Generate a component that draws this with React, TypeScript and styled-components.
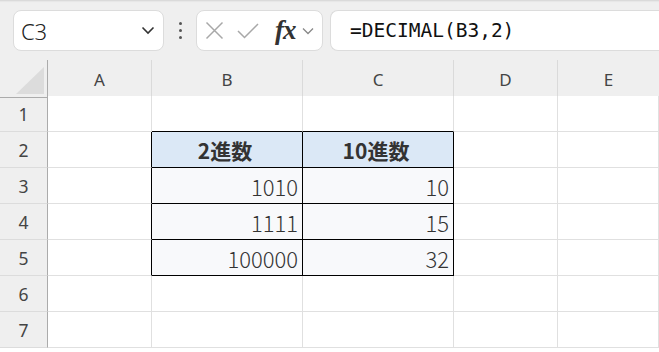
import React from 'react';
import styled, { createGlobalStyle } from 'styled-components';

const GlobalStyle = createGlobalStyle`
  html, body { margin: 0; padding: 0; background: #ffffff; overflow: hidden; }
  * { box-sizing: border-box; }
`;

const Page = styled.div`
  width: 659px;
  height: 352px;
  display: flex;
  flex-direction: column;
  background: #ffffff;
  font-family: "Noto Sans", "Liberation Sans", sans-serif;
`;

const Toolbar = styled.div`
  height: 60px;
  flex-shrink: 0;
  display: flex;
  align-items: flex-start;
  padding: 10px 0 0 13px;
  background: #efefef;
  box-shadow: inset 0 3px 2px -2px rgba(0, 0, 0, 0.12);
`;

const Box = styled.div<{ $w?: number; $grow?: boolean }>`
  height: 41px;
  width: ${(p) => (p.$w ? `${p.$w}px` : 'auto')};
  flex: ${(p) => (p.$grow ? '1 1 auto' : '0 0 auto')};
  background: #ffffff;
  border: 1px solid #dcdcdc;
  border-radius: 8px;
  display: flex;
  align-items: center;
`;

const FormulaBox = styled(Box)`
  border-right: none;
  border-top-right-radius: 0;
  border-bottom-right-radius: 0;
  margin-left: 7px;
`;

const NameText = styled.span`
  flex: 1;
  padding-left: 7px;
  font-size: 22px;
  font-weight: 300;
  color: #222;
  letter-spacing: -0.3px;
`;

const Dots = styled.div`
  width: 32px;
  height: 41px;
  display: flex;
  flex-direction: column;
  align-items: center;
  justify-content: center;
  gap: 4px;
  & > span {
    width: 3px;
    height: 3px;
    border-radius: 50%;
    background: #555;
  }
`;

const IconSlot = styled.span<{ $ml: number }>`
  display: inline-flex;
  margin-left: ${(p) => p.$ml}px;
`;

const FxText = styled.span`
  font-family: "Liberation Serif", serif;
  font-style: italic;
  font-weight: bold;
  font-size: 27px;
  line-height: 1;
  color: #333;
  margin: 0 6px 0 16px;
  letter-spacing: -1px;
`;

const FormulaText = styled.span`
  font-family: "DejaVu Sans Mono", "Liberation Mono", monospace;
  font-size: 19.5px;
  color: #111;
  padding-left: 19px;
`;

const Sheet = styled.div`
  display: grid;
  grid-template-columns: 48px 104px 151px 151px 104px 1fr;
  grid-auto-rows: 36px;
`;

const ColHead = styled.div<{ $last?: boolean }>`
  height: 38px;
  background: #efefef;
  border-bottom: 1px solid #ababab;
  border-right: ${(p) => (p.$last ? 'none' : '1px solid #dadada')};
  display: flex;
  align-items: center;
  justify-content: center;
  font-size: 17px;
  color: #444;
  padding-top: 2px;
`;

const Corner = styled.div`
  height: 38px;
  background: #efefef;
  border-bottom: 1px solid #ababab;
  border-right: 1px solid #ababab;
  position: relative;
  &::after {
    content: '';
    position: absolute;
    right: 3px;
    bottom: 3px;
    width: 0;
    height: 0;
    border-left: 28px solid transparent;
    border-bottom: 27px solid #dcdcdc;
  }
`;

const RowHead = styled.div`
  background: #efefef;
  border-right: 1px solid #ababab;
  border-bottom: 1px solid #dcdcdc;
  display: flex;
  align-items: center;
  justify-content: center;
  font-size: 17.5px;
  color: #444;
`;

type CellKind = 'plain' | 'head' | 'body';

const Cell = styled.div<{ $kind: CellKind; $edgeRight?: boolean; $edgeBottom?: boolean }>`
  background: ${(p) => (p.$kind === 'head' ? '#dbe8f6' : p.$kind === 'body' ? '#f8f9fb' : '#ffffff')};
  border-right: 1px solid ${(p) => (p.$kind !== 'plain' || p.$edgeRight ? '#000' : '#e0e0e0')};
  border-bottom: 1px solid ${(p) => (p.$kind !== 'plain' || p.$edgeBottom ? '#000' : '#e0e0e0')};
  display: flex;
  align-items: center;
  justify-content: ${(p) => (p.$kind === 'head' ? 'center' : 'flex-end')};
  padding-right: 4px;
  font-family: "Noto Sans CJK JP", "Noto Sans", sans-serif;
  font-size: ${(p) => (p.$kind === 'head' ? '21px' : '22px')};
  font-weight: ${(p) => (p.$kind === 'head' ? 700 : 300)};
  color: #333;
`;

const Chevron = () => (
  <svg width="14" height="9" viewBox="0 0 14 9">
    <polyline points="1.5,1.5 7,7 12.5,1.5" fill="none" stroke="#333" strokeWidth="1.6" />
  </svg>
);

const columns = ['A', 'B', 'C', 'D', 'E'];

const tableData: Record<number, [string, string]> = {
  2: ['2進数', '10進数'],
  3: ['1010', '10'],
  4: ['1111', '15'],
  5: ['100000', '32'],
};

const App: React.FC = () => {
  const rows = [1, 2, 3, 4, 5, 6, 7];

  return (
    <Page>
      <GlobalStyle />
      <Toolbar>
        <Box $w={151}>
          <NameText>C3</NameText>
          <IconSlot $ml={0} style={{ marginRight: 8 }}>
            <Chevron />
          </IconSlot>
        </Box>
        <Dots>
          <span />
          <span />
          <span />
        </Dots>
        <Box $w={127}>
          <IconSlot $ml={8}>
            <svg width="19" height="19" viewBox="0 0 19 19">
              <path d="M1.5 1.5 L17.5 17.5 M17.5 1.5 L1.5 17.5" stroke="#a8a8a8" strokeWidth="1.5" fill="none" />
            </svg>
          </IconSlot>
          <IconSlot $ml={13}>
            <svg width="22" height="16" viewBox="0 0 22 16">
              <polyline points="1,8 7.5,14.5 21,1" stroke="#a8a8a8" strokeWidth="1.5" fill="none" />
            </svg>
          </IconSlot>
          <FxText>fx</FxText>
          <svg width="12" height="8" viewBox="0 0 12 8">
            <polyline points="1,1.5 6,6.5 11,1.5" fill="none" stroke="#888" strokeWidth="1.3" />
          </svg>
        </Box>
        <FormulaBox $grow>
          <FormulaText>=DECIMAL(B3,2)</FormulaText>
        </FormulaBox>
      </Toolbar>
      <Sheet>
        <Corner />
        {columns.map((c, i) => (
          <ColHead key={c} $last={i === columns.length - 1}>
            {c}
          </ColHead>
        ))}
        {rows.map((r) => {
          const data = tableData[r];
          return (
            <React.Fragment key={r}>
              <RowHead>{r}</RowHead>
              <Cell $kind="plain" $edgeRight={!!data} />
              {data ? (
                <>
                  <Cell $kind={r === 2 ? 'head' : 'body'}>{data[0]}</Cell>
                  <Cell $kind={r === 2 ? 'head' : 'body'}>{data[1]}</Cell>
                </>
              ) : (
                <>
                  <Cell $kind="plain" $edgeBottom={r === 1} />
                  <Cell $kind="plain" $edgeBottom={r === 1} />
                </>
              )}
              <Cell $kind="plain" />
              <Cell $kind="plain" />
            </React.Fragment>
          );
        })}
      </Sheet>
    </Page>
  );
};

export default App;
